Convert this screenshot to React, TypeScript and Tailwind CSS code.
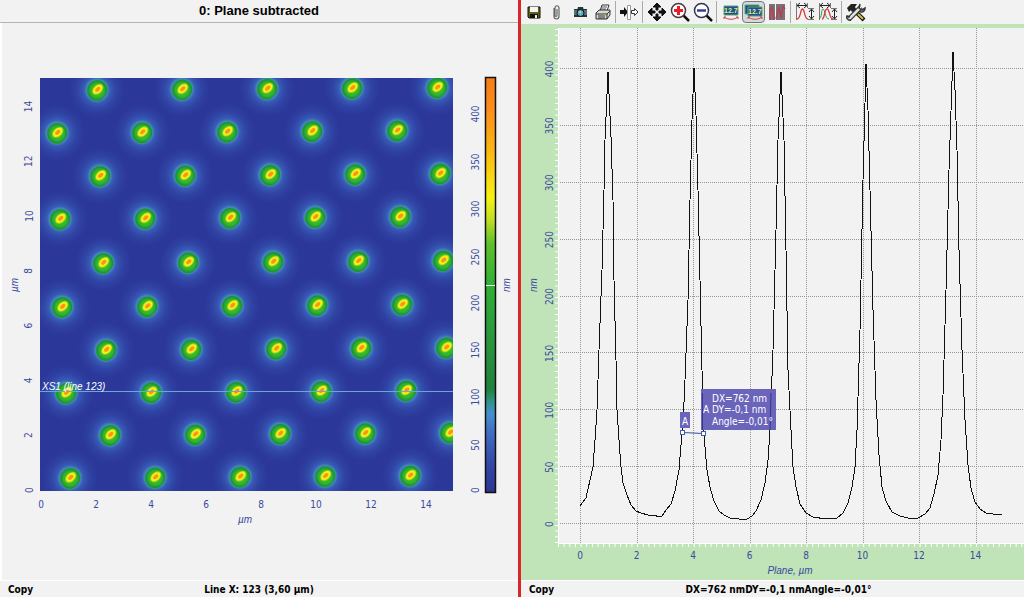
import type { ReactNode } from "react";

interface AxisLabelProps {
  x: number;
  y: number;
  children: ReactNode;
  vertical?: boolean;
  unit?: boolean;
}

interface ToolButtonProps {
  label: string;
  active?: boolean;
  children: ReactNode;
}

interface StatusBarProps {
  text: string;
  wide?: boolean;
}

const SPOT_ROWS = [
  { x: 97, y: 90 },
  { x: 57, y: 133 },
  { x: 100, y: 176 },
  { x: 60, y: 219 },
  { x: 103, y: 263 },
  { x: 62, y: 307 },
  { x: 106, y: 350 },
  { x: 66, y: 393 },
  { x: 110, y: 435 },
  { x: 70, y: 478 },
];

const SPOTS = SPOT_ROWS.flatMap((row) =>
  [0, 1, 2, 3, 4].map((i) => ({ x: row.x + i * 85, y: row.y - i * 0.6 })),
);

const SCALE_STOPS = [
  ["0%", "#f87c16"],
  ["8%", "#fb8f1a"],
  ["18%", "#fbb812"],
  ["29%", "#f6f312"],
  ["34%", "#c6df22"],
  ["40%", "#5fc02c"],
  ["50%", "#2fb035"],
  ["60%", "#2b9d3c"],
  ["75%", "#20803c"],
  ["78%", "#2f9385"],
  ["81%", "#4590cf"],
  ["86%", "#3f6cc0"],
  ["93%", "#3448a8"],
  ["100%", "#2b3590"],
];

const SCALE_LABELS = [
  { value: 400, y: 114 },
  { value: 350, y: 162 },
  { value: 300, y: 209 },
  { value: 250, y: 257 },
  { value: 200, y: 303 },
  { value: 150, y: 350 },
  { value: 100, y: 397 },
  { value: 50, y: 445 },
  { value: 0, y: 490 },
];

const MICRONS = [0, 2, 4, 6, 8, 10, 12, 14];
const HEIGHTS = [0, 50, 100, 150, 200, 250, 300, 350, 400];

const gridX = (um: number) => Math.round(580 + um * 28.25) + 0.5;
const gridY = (nm: number) => Math.round(523 - nm * 1.1375) + 0.5;

const PROFILE =
  "M580 506 L583 502 L586 498 L588 489 L591 476 L593 467 L595 440 L597 410 L599 350 L602 270 L604 190 L605 140 L608 72 L611 137 L613 200 L614 280 L616 360 L617 410 L619 440 L621 467 L623 483 L627 495 L631 505 L636 511 L641 513 L648 515 L654 515 L659 517 L662 516 L666 510 L671 504 L675 491 L679 470 L681 445 L683 425 L685 380 L688 300 L690 200 L692 120 L694 68 L696 115 L698 190 L700 280 L702 370 L704 436 L707 470 L710 487 L714 501 L719 511 L724 515 L730 518 L739 519 L747 519 L752 516 L756 511 L761 500 L765 483 L768 460 L770 430 L773 350 L776 230 L778 140 L781 72 L784 140 L786 250 L788 370 L791 430 L793 467 L796 487 L800 504 L806 513 L813 517 L826 519 L837 518 L843 513 L848 503 L852 487 L855 467 L857 430 L860 330 L863 180 L866 64 L868 110 L870 190 L873 310 L876 400 L879 455 L882 487 L886 501 L892 512 L900 516 L908 518 L918 518 L925 514 L930 508 L934 494 L938 475 L941 440 L943 395 L946 290 L949 170 L953 52 L955 90 L957 150 L959 250 L962 350 L965 420 L968 465 L971 488 L975 502 L980 509 L986 513 L993 514 L1002 514";

const AxisLabel = ({ x, y, children, vertical, unit }: AxisLabelProps) => (
  <text
    x={x}
    y={y}
    textAnchor="middle"
    dominantBaseline="central"
    transform={vertical ? `rotate(-90 ${x} ${y})` : undefined}
    className={
      unit
        ? "fill-[#3a4aa0] font-['Liberation_Sans',sans-serif] text-[10px] italic"
        : "fill-[#3a4aa0] font-['DejaVu_Sans_Condensed','DejaVu_Sans',sans-serif] text-[10px]"
    }
  >
    {children}
  </text>
);

const HeightMap = () => (
  <svg viewBox="2 23 516 557" className="block h-full w-full" role="img">
    <defs>
      <radialGradient id="glow">
        <stop offset="0%" stopColor="#4a94d0" />
        <stop offset="36%" stopColor="#4a94d0" stopOpacity="0.8" />
        <stop offset="44%" stopColor="#3f74c6" stopOpacity="0.6" />
        <stop offset="65%" stopColor="#3a5cba" stopOpacity="0.35" />
        <stop offset="100%" stopColor="#2f45a8" stopOpacity="0" />
      </radialGradient>
      <radialGradient id="peak">
        <stop offset="0%" stopColor="#4ac52b" />
        <stop offset="60%" stopColor="#35b52d" />
        <stop offset="88%" stopColor="#1c903a" />
        <stop offset="100%" stopColor="#339f7c" />
      </radialGradient>
      <linearGradient id="scale" x1="0" y1="0" x2="0" y2="1">
        {SCALE_STOPS.map(([offset, color]) => (
          <stop key={offset} offset={offset} stopColor={color} />
        ))}
      </linearGradient>
      <clipPath id="map">
        <rect x="40" y="78" width="413" height="413" />
      </clipPath>
    </defs>

    <g clipPath="url(#map)">
      <rect x="40" y="78" width="413" height="413" fill="#2b3799" />
      {SPOTS.map((spot, i) => (
        <circle key={i} cx={spot.x} cy={spot.y} r="30" fill="url(#glow)" />
      ))}
      {SPOTS.map((spot, i) => (
        <g key={i} transform={`translate(${spot.x} ${spot.y})`}>
          <path
            d="M-10.500 1 C-10.500 -4 -6 -9.500 0 -10.500 C6 -10.500 11 -6 11 -2 C11 4 5 11.500 -1 11.500 C-6 10.500 -10.500 6 -10.500 1Z"
            fill="url(#peak)"
          />
          <ellipse cx="1" cy="0" rx="6.500" ry="4.500" fill="#8fd61f" transform="rotate(-42)" />
          <ellipse cx="1" cy="0" rx="5.500" ry="3.600" fill="#f5ee18" transform="rotate(-42)" />
          <ellipse cx="1" cy="0" rx="3" ry="1.800" fill="#fb9418" transform="rotate(-42)" />
        </g>
      ))}
      <path d="M40 391.5H453" stroke="#6aa5dc" />
    </g>
    <text
      x="42"
      y="390"
      className="fill-white font-['Liberation_Sans',sans-serif] text-[10px] italic"
    >
      XS1 (line 123)
    </text>

    {MICRONS.map((um) => (
      <AxisLabel key={um} x={41 + um * 27.5} y={504}>
        {um}
      </AxisLabel>
    ))}
    {MICRONS.map((um) => (
      <AxisLabel key={um} x={29} y={490 - um * 27.4} vertical>
        {um}
      </AxisLabel>
    ))}
    <AxisLabel x={245} y={519} unit>
      µm
    </AxisLabel>
    <AxisLabel x={14} y={285} vertical unit>
      µm
    </AxisLabel>

    <rect x="485.5" y="77.5" width="10" height="415" fill="url(#scale)" stroke="#111" strokeWidth="1.5" />
    <path d="M486 285.5H495" stroke="#fff" />
    {SCALE_LABELS.map((label) => (
      <AxisLabel key={label.value} x={475} y={label.y} vertical>
        {label.value}
      </AxisLabel>
    ))}
    <AxisLabel x={506} y={285} vertical unit>
      nm
    </AxisLabel>
  </svg>
);

const CrossSection = () => (
  <svg viewBox="521 24 503 556" className="block h-full w-full" role="img">
    <rect x="558" y="28" width="466" height="515" fill="#f2f2f2" />
    <path d="M556.5 29V543" stroke="#fff" strokeWidth="3" strokeDasharray="1 4.7" />
    <path d="M558 545.5H1024" stroke="#fff" strokeWidth="3" strokeDasharray="1 4.65" />
    <path d="M558.5 28V543.5H1024" stroke="#fff" fill="none" />

    <g stroke="#949494" strokeDasharray="1 1" shapeRendering="crispEdges">
      {MICRONS.map((um) => (
        <path key={um} d={`M${gridX(um)} 28V543`} />
      ))}
      {HEIGHTS.map((nm) => (
        <path key={nm} d={`M560 ${gridY(nm)}H1024`} />
      ))}
    </g>
    <path d={PROFILE} fill="none" stroke="#111" shapeRendering="crispEdges" />

    {MICRONS.map((um) => (
      <AxisLabel key={um} x={580 + um * 28.25} y={555}>
        {um}
      </AxisLabel>
    ))}
    {HEIGHTS.map((nm) => (
      <AxisLabel key={nm} x={549} y={524 - nm * 1.1375} vertical>
        {nm}
      </AxisLabel>
    ))}
    <AxisLabel x={790} y={570} unit>
      Plane, µm
    </AxisLabel>
    <AxisLabel x={533} y={285} vertical unit>
      nm
    </AxisLabel>

    <g fill="#6a64bb">
      <rect x="680" y="412" width="10" height="16" />
      <rect x="701" y="389" width="75" height="41" />
    </g>
    <path d="M702.5 393V430M771 393L770 430" stroke="#38358a" fill="none" />
    <g className="fill-white font-['DejaVu_Sans_Condensed','DejaVu_Sans',sans-serif] text-[10px]">
      <text x="682" y="425">A</text>
      <text x="703" y="413">A</text>
      <text x="712" y="402">DX=762 nm</text>
      <text x="712" y="413">DY=-0,1 nm</text>
      <text x="712" y="425">Angle=-0,01°</text>
    </g>
    <path d="M682.5 432.5L703.5 433.5" stroke="#3a4f9c" />
    <g fill="#fff" stroke="#3a5fa8">
      <rect x="680.5" y="430.5" width="4" height="4" />
      <rect x="701.5" y="431.5" width="4" height="4" />
    </g>
  </svg>
);

const ToolButton = ({ label, active, children }: ToolButtonProps) => (
  <button
    type="button"
    aria-label={label}
    className={`flex h-[22px] w-[23px] shrink-0 items-center justify-center rounded-sm ${
      active ? "border border-[#777] bg-[#d3dadd]" : ""
    }`}
  >
    <svg viewBox="0 0 20 20" className="h-5 w-5 shrink-0" fill="none">
      {children}
    </svg>
  </button>
);

const Separator = ({ tight }: { tight?: boolean }) => (
  <div className={`h-[22px] w-px shrink-0 bg-[#aaa] ${tight ? "mx-px" : "mx-[2px]"}`} />
);

const Toolbar = () => (
  <div className="flex h-6 shrink-0 items-center bg-[#f2f2f2] pl-px">
    <ToolButton label="Save">
      <path d="M4 5h12v11H5l-1-1z" fill="#625f17" stroke="#111" />
      <path d="M6 5h8v5H6z" fill="#f4f4f4" />
      <path d="M6 12h8v4H6z" fill="#111" />
      <path d="M11 13h2v3h-2z" fill="#eee" />
    </ToolButton>
    <ToolButton label="Attach">
      <path d="M7 6v8c0 4 5 4 5 0V6c0-3-4-3-4 0v7c0 2 2 2 2 0V7" stroke="#666" strokeWidth="1.2" />
    </ToolButton>
    <ToolButton label="Snapshot">
      <path d="M4 7h3l1-2h5l1 2h3v8H4z" fill="#293338" />
      <path d="M4 8h3v5H4zM14 8h3v5h-3z" fill="#58717a" />
      <circle cx="10.500" cy="11" r="3.500" fill="#5cb3bd" stroke="#111" />
      <path d="M9 10h2M6 6h2M13 6h2" stroke="#e6f4f4" />
    </ToolButton>
    <ToolButton label="Print">
      <path d="M7 9l2-6h7l-2 6" fill="#fff" stroke="#333" />
      <path d="M9 5h5M8 7h5" stroke="#555" />
      <path d="M3 11l3-3h11v5l-3 4H3z" fill="#d6d6d6" stroke="#333" />
      <path d="M3 12h11l3-3M14 12v5M5 14h7M5 16h7" stroke="#333" />
      <path d="M11 13h2" stroke="#c7a625" />
    </ToolButton>
    <Separator tight />
    <ToolButton label="Split">
      <path d="M1 8h4V5l4 5-4 5v-3H1z" fill="#111" />
      <path d="M8.500 3.500h3v14h-3z" fill="#fff" stroke="#999" />
      <path d="M12.500 8.500h3v-2l3.500 3.500-3.500 3.500v-2h-3z" fill="#fff" stroke="#333" />
    </ToolButton>
    <Separator />
    <ToolButton label="Pan">
      <path
        d="M10 1l4 4h-3v3H9V5H6zM10 19l4-4h-3v-3H9v3H6zM1 10l4-4v3h3v2H5v3zM19 10l-4-4v3h-3v2h3v3z"
        fill="#111"
        stroke="#111"
      />
    </ToolButton>
    <ToolButton label="Zoom in">
      <path d="M13 13l6 6" stroke="#111" strokeWidth="2.500" />
      <circle cx="8.500" cy="8.500" r="7" fill="#fff" stroke="#4b3540" strokeWidth="1.500" />
      <path d="M8.500 4v9M4 8.500h9" stroke="#ed1b24" strokeWidth="3" />
    </ToolButton>
    <ToolButton label="Zoom out">
      <path d="M13 13l6 6" stroke="#111" strokeWidth="2.500" />
      <circle cx="8.500" cy="8.500" r="7" fill="#fff" stroke="#30334d" strokeWidth="1.500" />
      <path d="M4 8.500h9" stroke="#32419c" strokeWidth="2.500" />
    </ToolButton>
    <Separator />
    <ToolButton label="Show value">
      <path d="M3 4h14v9H3z" fill="#1e4f9b" stroke="#58a864" />
      <text x="3" y="11" className="fill-[#e8ec66] font-['Liberation_Sans',sans-serif] text-[7px] font-bold">
        12.7
      </text>
      <path d="M3 15c4 3 10 3 14 0" stroke="#d63c40" />
      <path d="M3 17v-2h2M17 17v-2h-2" stroke="#d63c40" />
    </ToolButton>
    <ToolButton label="Show all values" active>
      <path d="M1 3h14v9H1z" fill="#1e4f9b" stroke="#58a864" />
      <path d="M4 5h14v9H4z" fill="#1e4f9b" stroke="#58a864" />
      <text x="4" y="12" className="fill-[#e8ec66] font-['Liberation_Sans',sans-serif] text-[7px] font-bold">
        12.7
      </text>
      <path d="M4 15c4 3 10 3 14 0M4 17v-2h2M18 17v-2h-2" stroke="#d63c40" />
    </ToolButton>
    <ToolButton label="Compare profiles">
      <path d="M2 2h6v16H2zM9 2h9v16H9z" fill="#77737b" />
      <path d="M3 18V8l2-3 2 13M9 17l3-12 2 11 2-12 2 3" stroke="#b44253" strokeWidth="1.500" />
    </ToolButton>
    <Separator />
    <ToolButton label="Measure peak">
      <path d="M1.500 1v17M12.500 1v5M13 17.500h6M13 6.500h6" stroke="#777" />
      <path d="M2 3.500h10M5 1L2 3.500 5 6M9 1l3 2.500L9 6M16.500 7v10M14 10l2.500-3 2.500 3M14 14l2.500 3 2.500-3" stroke="#222" />
      <path d="M2 17c4 0 3-10 5.500-10S9 17 13 17" stroke="#dd3a3a" strokeWidth="1.300" />
    </ToolButton>
    <ToolButton label="Measure two peaks">
      <path d="M1.500 1v17M12.500 1v5M13 17.500h6M13 6.500h6" stroke="#777" />
      <path d="M2 3.500h10M5 1L2 3.500 5 6M9 1l3 2.500L9 6M16.500 7v10M14 10l2.500-3 2.500 3M14 14l2.500 3 2.500-3" stroke="#222" />
      <path d="M1 17c3 0 2-10 4-10s2 10 6 10" stroke="#38945a" />
      <path d="M4 17c3 0 2-10 5-10s2 10 6 10" stroke="#dd3a3a" strokeWidth="1.300" />
    </ToolButton>
    <Separator />
    <ToolButton label="Tools">
      <path d="M5 5l13 13" stroke="#111" strokeWidth="4" />
      <path d="M12 12l5 5" stroke="#d8c234" strokeWidth="2" />
      <path d="M1 6l4-4 6 0-2 3 1 2-4 3-1-2-2 2z" fill="#222" />
      <path d="M3 17L15 5" stroke="#333" strokeWidth="5" />
      <path d="M3 17L15 5" stroke="#dce1e2" strokeWidth="2.500" />
      <path d="M14 2l-1 4 3 2 3-2c0 4-4 5-6 3M5 18c-3 1-5-2-4-4l3 1" stroke="#333" strokeWidth="1.500" />
    </ToolButton>
  </div>
);

const StatusBar = ({ text, wide }: StatusBarProps) => (
  <div
    className={`grid h-[17px] shrink-0 grid-cols-[1fr_auto_1fr] items-center border-t border-white bg-[#f2f2f2] px-2 font-['DejaVu_Sans_Condensed','DejaVu_Sans',sans-serif] text-[10px] font-bold text-black ${
      wide ? "-mr-3" : ""
    }`}
  >
    <button type="button" className="justify-self-start">
      Copy
    </button>
    <span>{text}</span>
  </div>
);

const App = () => {
  return (
    <main className="grid h-screen grid-cols-[521fr_503fr] overflow-hidden bg-[#f2f2f2]">
      <section className="flex min-w-0 flex-col border-r-3 border-[#d9252c]">
        <h1 className="h-[23px] shrink-0 border-b border-[#b5b5b5] text-center font-['Liberation_Sans',sans-serif] text-[13px] leading-[22px] font-bold text-black">
          0: Plane subtracted
        </h1>
        <div className="min-h-0 flex-1 border-l-2 border-white">
          <HeightMap />
        </div>
        <StatusBar text="Line X: 123 (3,60 µm)" />
      </section>
      <section className="flex min-w-0 flex-col overflow-hidden">
        <Toolbar />
        <div className="min-h-0 flex-1 bg-[#c0e3b7]">
          <CrossSection />
        </div>
        <StatusBar text="DX=762 nmDY=-0,1 nmAngle=-0,01°" wide />
      </section>
    </main>
  );
};

export default App;
